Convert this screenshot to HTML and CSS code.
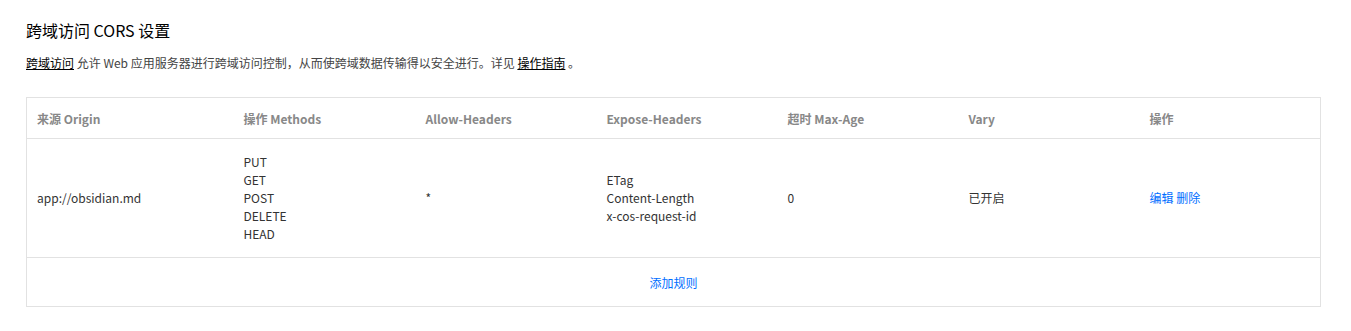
FILE: index.html
```html
<!DOCTYPE html>
<html lang="zh-CN">
<head>
    <meta charset="UTF-8">
    <title>跨域访问 CORS 设置</title>
    <link rel="stylesheet" href="styles.css">
</head>
<body>
    <div class="panel">
        <h2 class="title">跨域访问 CORS 设置</h2>
        <p class="desc">
            <a class="doc" href="#">跨域访问</a> 允许 Web 应用服务器进行跨域访问控制，从而使跨域数据传输得以安全进行。详见 <a class="doc" href="#">操作指南</a> 。
        </p>
        <table class="rules">
            <colgroup>
                <col style="width:217px">
                <col style="width:182px">
                <col style="width:181px">
                <col style="width:181px">
                <col style="width:181px">
                <col style="width:181px">
                <col>
            </colgroup>
            <thead>
                <tr>
                    <th>来源 Origin</th>
                    <th>操作 Methods</th>
                    <th>Allow-Headers</th>
                    <th>Expose-Headers</th>
                    <th>超时 Max-Age</th>
                    <th>Vary</th>
                    <th>操作</th>
                </tr>
            </thead>
            <tbody>
                <tr class="rule">
                    <td>app://obsidian.md</td>
                    <td>PUT<br>GET<br>POST<br>DELETE<br>HEAD</td>
                    <td>*</td>
                    <td>ETag<br>Content-Length<br>x-cos-request-id</td>
                    <td>0</td>
                    <td>已开启</td>
                    <td><a class="act" href="#">编辑</a> <a class="act" href="#">删除</a></td>
                </tr>
                <tr class="add">
                    <td colspan="7"><a class="act" href="#">添加规则</a></td>
                </tr>
            </tbody>
        </table>
    </div>
</body>
</html>
```

FILE: styles.css
```css
body {
    margin: 0;
    background-color: #fff;
    font-family: "Segoe UI", "Noto Sans CJK SC", "Noto Sans", sans-serif;
    color: #333;
}
.panel {
    padding: 18px 30px 0 26px;
}
.title {
    margin: 0;
    font-size: 16px;
    font-weight: normal;
    line-height: 24px;
    color: #000;
}
.desc {
    margin: 12px 0 25px;
    font-size: 12px;
    line-height: 18px;
    color: #444;
}
.doc {
    color: #000;
    text-decoration: underline;
}
.rules {
    width: 1295px;
    border-collapse: collapse;
    table-layout: fixed;
    border: 1px solid #e2e2e2;
    font-size: 12px;
}
.rules th {
    height: 40px;
    padding: 0 10px;
    text-align: left;
    font-weight: bold;
    color: #888;
    border-bottom: 1px solid #e2e2e2;
}
.rules th:first-child,
.rule td:first-child {
    padding-left: 10px;
}
.rules th + th,
.rule td + td {
    padding-left: 0;
}
.rule td {
    height: 118px;
    padding: 0 10px;
    line-height: 18px;
    vertical-align: middle;
    border-bottom: 1px solid #e2e2e2;
}
.add td {
    height: 48px;
    padding: 0;
    text-align: center;
}
.act {
    color: #006eff;
    text-decoration: none;
}
```
